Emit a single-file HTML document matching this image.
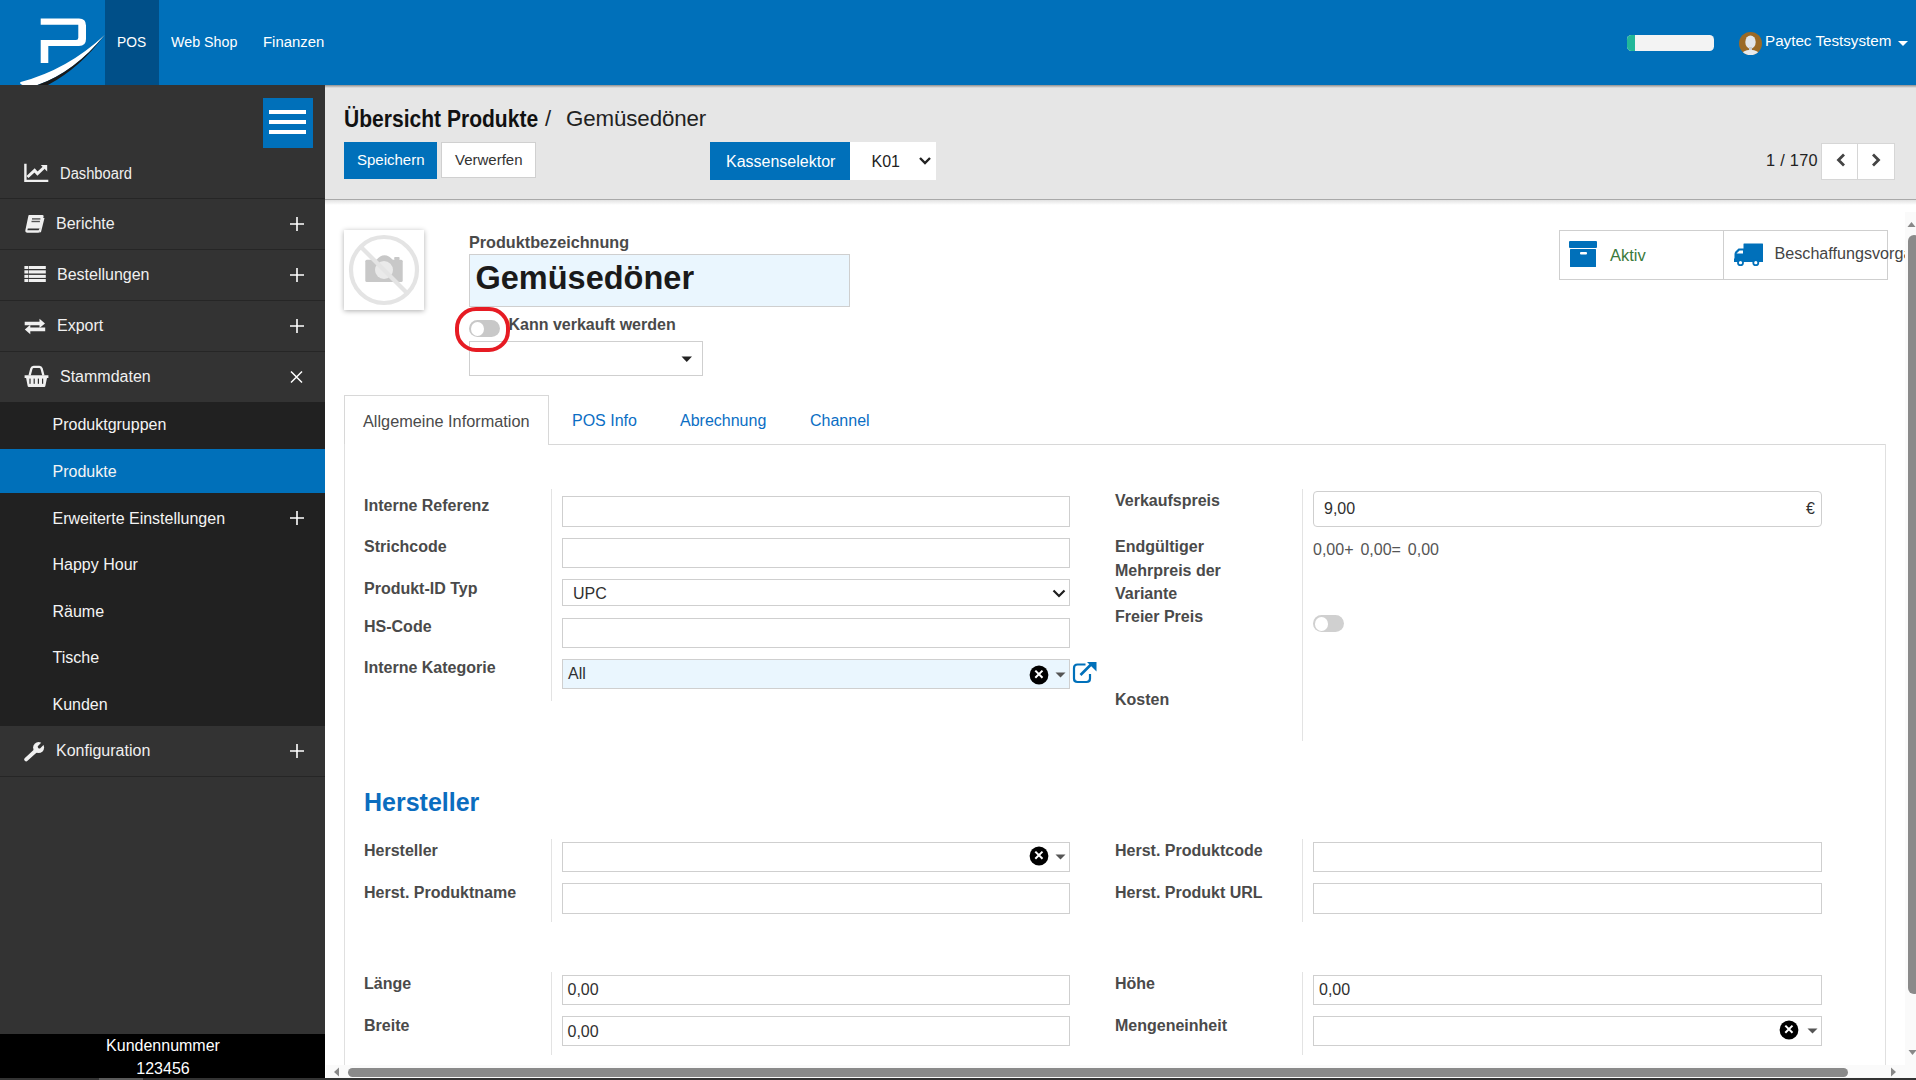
<!DOCTYPE html>
<html><head><meta charset="utf-8"><style>
html,body{margin:0;padding:0;width:1916px;height:1080px;overflow:hidden;background:#fff;}
body{position:relative;font-family:"Liberation Sans", sans-serif;}
.a{position:absolute;}
.t{white-space:nowrap;line-height:1;}
</style></head><body>
<div class="a" style="left:0px;top:0px;width:1916px;height:85px;background:#0070ba;"></div>
<div class="a" style="left:105px;top:0px;width:54px;height:85px;background:#004f88;"></div>
<svg class="a" style="left:0;top:0" width="105" height="85" viewBox="0 0 105 85">
<path d="M40.7 18.5 H79 Q86 18.5 86 25.5 V39 Q86 46 79 46 H48.3 V63 H40.7 V40 H76 Q78.3 40 78.3 37.7 V24.75 H40.7 Z" fill="#fff"/>
<path d="M20.7 81.9 Q67.3 69.6 104.7 34.9 Q73.65 72.8 36 85.5 L24 85.5 Q18.5 84 20.7 81.9 Z" fill="#fff"/>
<path d="M104.7 34.9 Q73.65 72.8 36 85.5 L47 85.5 Q80.15 67.8 104.7 34.9 Z" fill="#1a1a1a"/>
</svg>
<div class="a t" style="left:117px;top:33.88px;font-size:15.5px;color:#fff;transform:scaleX(0.89);transform-origin:0 0;">POS</div>
<div class="a t" style="left:171px;top:33.88px;font-size:15.5px;color:#fff;transform:scaleX(0.92);transform-origin:0 0;">Web Shop</div>
<div class="a t" style="left:263px;top:33.88px;font-size:15.5px;color:#fff;transform:scaleX(0.96);transform-origin:0 0;">Finanzen</div>
<div class="a" style="left:1627px;top:35px;width:87px;height:16px;background:#f3f3f3;border-radius:4.5px;overflow:hidden;"></div>
<div class="a" style="left:1627px;top:35px;width:8px;height:16px;background:#21b799;border-radius:4.5px 0 0 4.5px;"></div>
<svg class="a" style="left:1739px;top:32px" width="23" height="23" viewBox="0 0 23 23">
<circle cx="11.5" cy="11.5" r="11.5" fill="#9b6a26"/>
<clipPath id="avc"><circle cx="11.5" cy="11.5" r="11.5"/></clipPath>
<g clip-path="url(#avc)"><ellipse cx="11.5" cy="10" rx="5.2" ry="6.6" fill="#e2e6ea"/><rect x="10" y="15" width="3" height="3" fill="#c9ced4"/><ellipse cx="11.5" cy="23.8" rx="9.5" ry="6" fill="#e8eaec"/></g>
</svg>
<div class="a t" style="left:1765px;top:33.13px;font-size:15.2px;color:#fff;">Paytec Testsystem</div>
<svg class="a" style="left:1898px;top:41px" width="11" height="6"><path d="M0 0 H10 L5 5 Z" fill="#fff"/></svg>
<div class="a" style="left:0px;top:85px;width:325px;height:995px;background:#333333;"></div>
<div class="a" style="left:263px;top:98px;width:50px;height:50px;background:#0070ba;"></div>
<div class="a" style="left:269px;top:110px;width:37px;height:4px;background:#fff;"></div>
<div class="a" style="left:269px;top:120px;width:37px;height:4px;background:#fff;"></div>
<div class="a" style="left:269px;top:130px;width:37px;height:4px;background:#fff;"></div>
<div class="a" style="left:0px;top:198px;width:325px;height:1px;background:#262626;"></div>
<div class="a" style="left:0px;top:249px;width:325px;height:1px;background:#262626;"></div>
<div class="a" style="left:0px;top:300px;width:325px;height:1px;background:#262626;"></div>
<div class="a" style="left:0px;top:351px;width:325px;height:1px;background:#262626;"></div>
<svg class="a" style="left:24px;top:163px" width="26" height="20" viewBox="0 0 26 20">
<path d="M1.4 0.7 V17.9 H24.3" stroke="#f0f0f0" stroke-width="2.4" fill="none"/>
<path d="M3.5 14 L10.6 7.4 L13.5 10.7 L20 4.5" stroke="#f0f0f0" stroke-width="3" fill="none" stroke-linejoin="miter"/>
<path d="M16.8 2 H23.2 V8.4 Z" fill="#f0f0f0"/>
</svg>
<div class="a t" style="left:60px;top:165.96px;font-size:16px;color:#f0f0f0;transform:scaleX(0.92);transform-origin:0 0;">Dashboard</div>
<svg class="a" style="left:24px;top:214px" width="21" height="20" viewBox="0 0 21 20">
<path d="M5 1 H18.5 Q20 1 19.6 2.6 L16 17.2 Q15.5 18.7 14 18.7 H3 Q1 18.7 1.3 16.6 L4.3 2.3 Q4.6 1 5 1 Z" fill="#f0f0f0"/>
<path d="M3.4 16.2 H14.6 L15.6 14.5 H3.8 Z" fill="#333"/>
<rect x="8" y="4.2" width="8.4" height="1.4" fill="#555"/>
<rect x="7.5" y="6.8" width="8.4" height="1.4" fill="#555"/>
<path d="M18.3 4 L20.5 4 L17 18 L15.5 18.7 Z" fill="#f0f0f0"/>
</svg>
<div class="a t" style="left:56px;top:215.96px;font-size:16px;color:#f0f0f0;">Berichte</div>
<svg class="a" style="left:24px;top:265px" width="22" height="18" viewBox="0 0 22 18">
<rect x="0.4" y="1" width="3.9" height="3" fill="#f0f0f0"/><rect x="4.9" y="1" width="16.9" height="3" fill="#f0f0f0"/>
<rect x="0.4" y="5.3" width="3.9" height="3.2" fill="#f0f0f0"/><rect x="4.9" y="5.3" width="16.9" height="3.2" fill="#f0f0f0"/>
<rect x="0.4" y="9.9" width="3.9" height="3" fill="#f0f0f0"/><rect x="4.9" y="9.9" width="16.9" height="3" fill="#f0f0f0"/>
<rect x="0.4" y="14" width="3.9" height="3" fill="#f0f0f0"/><rect x="4.9" y="14" width="16.9" height="3" fill="#f0f0f0"/>
</svg>
<div class="a t" style="left:57px;top:266.96px;font-size:16px;color:#f0f0f0;">Bestellungen</div>
<svg class="a" style="left:24px;top:318px" width="22" height="17" viewBox="0 0 22 17">
<path d="M0.7 3.8 H15.5 V0.8 L21 5.5 L15.5 10 V7.2 H0.7 Z" fill="#f0f0f0"/>
<path d="M21.2 9.6 H6.3 V6.8 L0.8 11.5 L6.3 16.2 V13.2 H21.2 Z" fill="#f0f0f0"/>
</svg>
<div class="a t" style="left:57px;top:317.96px;font-size:16px;color:#f0f0f0;">Export</div>
<svg class="a" style="left:24px;top:365px" width="25" height="23" viewBox="0 0 25 23">
<path d="M5.6 10.5 L7.4 3.6 Q7.9 1.9 9.6 1.9 H15.4 Q17.1 1.9 17.6 3.6 L19.4 10.5" stroke="#f0f0f0" stroke-width="2.3" fill="none"/>
<path d="M0.6 10.2 H24.4 V13.1 H23 L21.3 21.3 Q21.1 22 20.3 22 H4.8 Q3.9 22 3.7 21.3 L2.1 13.1 H0.6 Z" fill="#f0f0f0"/>
<rect x="5.4" y="13.6" width="1.2" height="5.2" fill="#333"/><rect x="9.6" y="13.6" width="1.2" height="5.2" fill="#333"/>
<rect x="13.8" y="13.6" width="1.2" height="5.2" fill="#333"/><rect x="18" y="13.6" width="1.2" height="5.2" fill="#333"/>
</svg>
<div class="a t" style="left:60px;top:368.96px;font-size:16px;color:#f0f0f0;">Stammdaten</div>
<svg class="a" style="left:289px;top:215.5px" width="16" height="16" viewBox="0 0 16 16"><path d="M8 1 V15 M1 8 H15" stroke="#fff" stroke-width="1.6"/></svg>
<svg class="a" style="left:289px;top:266.5px" width="16" height="16" viewBox="0 0 16 16"><path d="M8 1 V15 M1 8 H15" stroke="#fff" stroke-width="1.6"/></svg>
<svg class="a" style="left:289px;top:317.5px" width="16" height="16" viewBox="0 0 16 16"><path d="M8 1 V15 M1 8 H15" stroke="#fff" stroke-width="1.6"/></svg>
<svg class="a" style="left:288px;top:369px" width="16" height="16" viewBox="0 0 16 16"><path d="M3 2.5 L14 13.5 M14 2.5 L3 13.5" stroke="#fff" stroke-width="1.5"/></svg>
<div class="a" style="left:0px;top:402px;width:325px;height:324px;background:#212121;"></div>
<div class="a" style="left:0px;top:449px;width:325px;height:44px;background:#0070ba;"></div>
<div class="a t" style="left:52.5px;top:417.16px;font-size:16px;color:#f4f4f4;">Produktgruppen</div>
<div class="a t" style="left:52.5px;top:464.16px;font-size:16px;color:#f4f4f4;">Produkte</div>
<div class="a t" style="left:52.5px;top:511.16px;font-size:16px;color:#f4f4f4;">Erweiterte Einstellungen</div>
<div class="a t" style="left:52.5px;top:557.16px;font-size:16px;color:#f4f4f4;">Happy Hour</div>
<div class="a t" style="left:52.5px;top:604.16px;font-size:16px;color:#f4f4f4;">Räume</div>
<div class="a t" style="left:52.5px;top:650.16px;font-size:16px;color:#f4f4f4;">Tische</div>
<div class="a t" style="left:52.5px;top:697.16px;font-size:16px;color:#f4f4f4;">Kunden</div>
<svg class="a" style="left:289px;top:510px" width="16" height="16" viewBox="0 0 16 16"><path d="M8 1 V15 M1 8 H15" stroke="#fff" stroke-width="1.6"/></svg>
<svg class="a" style="left:24px;top:741px" width="22" height="22" viewBox="0 0 22 22">
<path d="M2.2 18.4 L11.4 10" stroke="#f0f0f0" stroke-width="3.9" stroke-linecap="round"/>
<circle cx="14.6" cy="6.6" r="5.5" fill="#f0f0f0"/>
<path d="M15.4 5.8 L20.5 0.7" stroke="#333" stroke-width="3.2" stroke-linecap="round"/>
</svg>
<div class="a t" style="left:56px;top:742.96px;font-size:16px;color:#f0f0f0;">Konfiguration</div>
<div class="a" style="left:0px;top:776px;width:325px;height:1px;background:#262626;"></div>
<svg class="a" style="left:289px;top:743px" width="16" height="16" viewBox="0 0 16 16"><path d="M8 1 V15 M1 8 H15" stroke="#fff" stroke-width="1.6"/></svg>
<div class="a" style="left:0px;top:1034px;width:325px;height:46px;background:#000;"></div>
<div class="a t" style="left:163px;top:1037.96px;font-size:16px;color:#fff;transform:translateX(-50%);">Kundennummer</div>
<div class="a t" style="left:163px;top:1060.96px;font-size:16px;color:#fff;transform:translateX(-50%);">123456</div>
<div class="a" style="left:325px;top:85px;width:1591px;height:114px;background:#e6e6e6;"></div>
<div class="a" style="left:325px;top:199px;width:1591px;height:1px;background:#a9a9a9;"></div>
<div class="a" style="left:325px;top:200px;width:1591px;height:5px;background:linear-gradient(#e2e2e2,#fff);"></div>
<div class="a" style="left:325px;top:85px;width:1591px;height:3px;background:linear-gradient(#8f8f8f,#e6e6e6);"></div>
<div class="a t" style="left:344px;top:106.7px;font-size:24px;font-weight:700;color:#111;transform:scaleX(0.877);transform-origin:0 0;">Übersicht Produkte</div>
<div class="a t" style="left:545px;top:108.38px;font-size:22px;color:#222;">/</div>
<div class="a t" style="left:566px;top:108.12px;font-size:22.3px;color:#222;letter-spacing:-0.1px;">Gemüsedöner</div>
<div class="a" style="left:344px;top:142px;width:93px;height:37px;background:#0070ba;"></div>
<div class="a t" style="left:357px;top:151.80px;font-size:15px;color:#fff;">Speichern</div>
<div class="a" style="left:441px;top:142px;width:95px;height:36px;background:#fff;border:1px solid #d0d0d0;box-sizing:border-box;"></div>
<div class="a t" style="left:455px;top:151.80px;font-size:15px;color:#333;">Verwerfen</div>
<div class="a" style="left:710px;top:142px;width:140px;height:38px;background:#0070ba;"></div>
<div class="a t" style="left:726px;top:154.46px;font-size:16px;color:#fff;">Kassenselektor</div>
<div class="a" style="left:850px;top:142px;width:86px;height:38px;background:#fff;"></div>
<div class="a t" style="left:871.5px;top:154.46px;font-size:16px;color:#222;">K01</div>
<svg class="a" style="left:918px;top:156px" width="14" height="10" viewBox="0 0 14 10"><path d="M2 2 L7 7 L12 2" stroke="#222" stroke-width="2.4" fill="none"/></svg>
<div class="a t" style="left:1766px;top:152.20px;font-size:16.3px;color:#222;letter-spacing:0.3px;">1 / 170</div>
<div class="a" style="left:1821px;top:143px;width:74px;height:37px;background:#fff;border:1px solid #d6d6d6;box-sizing:border-box;"></div>
<div class="a" style="left:1857px;top:143px;width:1px;height:37px;background:#d6d6d6;"></div>
<svg class="a" style="left:1834.5px;top:152.5px" width="12" height="14" viewBox="0 0 12 14"><path d="M9 1.5 L3.5 7 L9 12.5" stroke="#444" stroke-width="2.8" fill="none"/></svg>
<svg class="a" style="left:1870px;top:152.5px" width="12" height="14" viewBox="0 0 12 14"><path d="M3 1.5 L8.5 7 L3 12.5" stroke="#444" stroke-width="2.8" fill="none"/></svg>
<div class="a" style="left:344px;top:230px;width:80px;height:80px;background:#fff;box-shadow:0 1px 5px rgba(0,0,0,0.32);"></div>
<svg class="a" style="left:344px;top:230px" width="80" height="80" viewBox="0 0 80 80">
<rect x="21.3" y="29.8" width="37.4" height="22.2" rx="1.5" fill="#c8c8c8"/>
<path d="M32.4 30 Q36 25.3 40.5 25.3 Q45 25.3 48.9 30 Z" fill="#c8c8c8"/>
<rect x="50.2" y="27.1" width="5.4" height="3" rx="0.8" fill="#c8c8c8"/>
<circle cx="40" cy="40" r="9" fill="#eaeaea"/>
<circle cx="40" cy="40" r="33" stroke="#e4e4e4" stroke-width="4.2" fill="none"/>
<path d="M17 17 L63 63" stroke="#e4e4e4" stroke-width="4.2"/>
</svg>
<div class="a t" style="left:469px;top:233.89px;font-size:16.2px;color:#4a4a4a;font-weight:700;">Produktbezeichnung</div>
<div class="a" style="left:469px;top:254px;width:381px;height:53px;background:#eaf6fe;border:1px solid #cfcfcf;box-sizing:border-box;"></div>
<div class="a t" style="left:475.5px;top:262.49px;font-size:32.5px;color:#1a1a1a;font-weight:700;">Gemüsedöner</div>
<div class="a" style="left:469px;top:320px;width:31px;height:17px;background:#c8c8c8;border-radius:9px;"></div>
<div class="a" style="left:470.5px;top:321.5px;width:13.0px;height:14.0px;background:#fff;border-radius:50%;"></div>
<div class="a t" style="left:508.5px;top:317.46px;font-size:16px;color:#4a4a4a;font-weight:700;">Kann verkauft werden</div>
<div class="a" style="left:469px;top:341px;width:234px;height:35px;background:#fff;border:1px solid #cfcfcf;box-sizing:border-box;"></div>
<svg class="a" style="left:681px;top:356px" width="12" height="7"><path d="M0.5 0.5 H11 L5.75 6 Z" fill="#222"/></svg>
<div class="a" style="left:455px;top:307px;width:55px;height:45px;border:4px solid #e61b23;border-radius:21px;box-sizing:border-box;"></div>
<div class="a" style="left:1559px;top:230px;width:329px;height:50px;background:#fff;border:1px solid #cfcfcf;box-sizing:border-box;"></div>
<div class="a" style="left:1723px;top:230px;width:1px;height:50px;background:#cfcfcf;"></div>
<svg class="a" style="left:1568px;top:240px" width="30" height="28" viewBox="0 0 30 28">
<rect x="1" y="1" width="28" height="7" rx="1" fill="#0070ba"/>
<rect x="2" y="9" width="26" height="18" rx="0.5" fill="#0070ba"/>
<rect x="12" y="12" width="7" height="2.4" rx="1" fill="#fff"/>
</svg>
<div class="a t" style="left:1610px;top:246.53px;font-size:16.5px;color:#3b7a3b;">Aktiv</div>
<svg class="a" style="left:1732.5px;top:243px" width="31" height="25" viewBox="0 0 31 25">
<rect x="10.5" y="0.5" width="19.5" height="16.5" rx="0.5" fill="#0070ba"/>
<path d="M1.5 18.5 V11 Q1.5 9.5 2.5 8.5 L5.5 5.5 H11 V17 Z" fill="#0070ba"/>
<path d="M3.5 10.5 L6.6 7.4 H10 V10.5 Z" fill="#fff"/>
<rect x="1" y="15.5" width="29" height="3.5" fill="#0070ba"/>
<circle cx="7.5" cy="19.7" r="3.4" fill="#0070ba"/><circle cx="7.5" cy="19.7" r="1.6" fill="#fff"/>
<circle cx="22.8" cy="19.7" r="3.4" fill="#0070ba"/><circle cx="22.8" cy="19.7" r="1.6" fill="#fff"/>
</svg>
<div class="a" style="left:1774px;top:230px;width:131px;height:50px;overflow:hidden;">
<div class="a t" style="left:0.5px;top:14.83px;font-size:16.15px;color:#444;">Beschaffungsvorgänge</div>
</div>
<div class="a" style="left:344px;top:395px;width:205px;height:50px;background:#fff;border:1px solid #d8d8d8;border-bottom:none;box-sizing:border-box;"></div>
<div class="a" style="left:549px;top:444px;width:1337px;height:1px;background:#d8d8d8;"></div>
<div class="a" style="left:344px;top:444px;width:1px;height:621px;background:#e0e0e0;"></div>
<div class="a" style="left:1885px;top:444px;width:1px;height:621px;background:#e0e0e0;"></div>
<div class="a t" style="left:363px;top:413.00px;font-size:16.3px;color:#4a4a4a;">Allgemeine Information</div>
<div class="a t" style="left:572px;top:413.26px;font-size:16px;color:#0b6ec4;">POS Info</div>
<div class="a t" style="left:680px;top:413.26px;font-size:16px;color:#0b6ec4;">Abrechnung</div>
<div class="a t" style="left:810px;top:413.26px;font-size:16px;color:#0b6ec4;">Channel</div>
<div class="a" style="left:551px;top:489px;width:1px;height:212px;background:#e3e3e3;"></div>
<div class="a t" style="left:364px;top:498.46px;font-size:16px;color:#4a4a4a;font-weight:700;">Interne Referenz</div>
<div class="a t" style="left:364px;top:539.46px;font-size:16px;color:#4a4a4a;font-weight:700;">Strichcode</div>
<div class="a t" style="left:364px;top:581.46px;font-size:16px;color:#4a4a4a;font-weight:700;">Produkt-ID Typ</div>
<div class="a t" style="left:364px;top:619.46px;font-size:16px;color:#4a4a4a;font-weight:700;">HS-Code</div>
<div class="a t" style="left:364px;top:660.46px;font-size:16px;color:#4a4a4a;font-weight:700;">Interne Kategorie</div>
<div class="a" style="left:562px;top:496px;width:508px;height:31px;background:#fff;border:1px solid #cfcfcf;box-sizing:border-box;"></div>
<div class="a" style="left:562px;top:538px;width:508px;height:30px;background:#fff;border:1px solid #cfcfcf;box-sizing:border-box;"></div>
<div class="a" style="left:562px;top:579px;width:508px;height:27px;background:#fff;border:1px solid #cfcfcf;box-sizing:border-box;"></div>
<div class="a t" style="left:573px;top:586.46px;font-size:16px;color:#303030;">UPC</div>
<svg class="a" style="left:1052px;top:588.5px" width="14" height="9" viewBox="0 0 14 9"><path d="M1.5 1.5 L7 7 L12.5 1.5" stroke="#1e1e1e" stroke-width="2.2" fill="none"/></svg>
<div class="a" style="left:562px;top:618px;width:508px;height:30px;background:#fff;border:1px solid #cfcfcf;box-sizing:border-box;"></div>
<div class="a" style="left:562px;top:659px;width:508px;height:30px;background:#eaf6fe;border:1px solid #cfcfcf;box-sizing:border-box;"></div>
<div class="a t" style="left:568px;top:666.46px;font-size:16px;color:#303030;">All</div>
<svg class="a" style="left:1028.5px;top:665.3px" width="20" height="20" viewBox="0 0 20 20"><circle cx="10" cy="10" r="9.4" fill="#000"/><path d="M6.3 5.6 L13.5 12.8 M13.5 5.6 L6.3 12.8" stroke="#fff" stroke-width="2"/></svg>
<svg class="a" style="left:1054.5px;top:672px" width="11" height="6"><path d="M0.5 0.5 H10.5 L5.5 5.5 Z" fill="#555"/></svg>
<svg class="a" style="left:1072px;top:661px" width="26" height="23" viewBox="0 0 26 23">
<path d="M13.5 3.5 H5.5 Q2 3.5 2 7 V17.5 Q2 21 5.5 21 H14.5 Q18 21 18 17.5 V13" stroke="#0070ba" stroke-width="2.2" fill="none"/>
<path d="M8.5 14 L20 2.5" stroke="#0070ba" stroke-width="2.6"/>
<path d="M15 1 H24.5 V10.5 Z" fill="#0070ba"/>
</svg>
<div class="a" style="left:1302px;top:489px;width:1px;height:252px;background:#e3e3e3;"></div>
<div class="a t" style="left:1115px;top:493.46px;font-size:16px;color:#4a4a4a;font-weight:700;">Verkaufspreis</div>
<div class="a" style="left:1313px;top:491px;width:509px;height:36px;background:#fff;border:1px solid #cfcfcf;box-sizing:border-box;border-radius:4px;"></div>
<div class="a t" style="left:1324px;top:501.46px;font-size:16px;color:#303030;">9,00</div>
<div class="a t" style="left:1806px;top:501.46px;font-size:16px;color:#303030;">€</div>
<div class="a t" style="left:1115px;top:539.46px;font-size:16px;color:#4a4a4a;font-weight:700;">Endgültiger</div>
<div class="a t" style="left:1115px;top:563.46px;font-size:16px;color:#4a4a4a;font-weight:700;">Mehrpreis der</div>
<div class="a t" style="left:1115px;top:586.46px;font-size:16px;color:#4a4a4a;font-weight:700;">Variante</div>
<div class="a t" style="left:1115px;top:609.46px;font-size:16px;color:#4a4a4a;font-weight:700;">Freier Preis</div>
<div class="a t" style="left:1313px;top:542.46px;font-size:16px;color:#555;word-spacing:2.5px;">0,00+ 0,00= 0,00</div>
<div class="a" style="left:1313px;top:615px;width:31px;height:17px;background:#d0d0d0;border-radius:9px;"></div>
<div class="a" style="left:1314.5px;top:616.5px;width:13.5px;height:14.0px;background:#fff;border-radius:50%;"></div>
<div class="a t" style="left:1115px;top:692.46px;font-size:16px;color:#4a4a4a;font-weight:700;">Kosten</div>
<div class="a t" style="left:364px;top:789.84px;font-size:25px;color:#0b6dbf;font-weight:700;">Hersteller</div>
<div class="a" style="left:551px;top:839px;width:1px;height:83px;background:#e3e3e3;"></div>
<div class="a t" style="left:364px;top:843.46px;font-size:16px;color:#4a4a4a;font-weight:700;">Hersteller</div>
<div class="a t" style="left:364px;top:885.46px;font-size:16px;color:#4a4a4a;font-weight:700;">Herst. Produktname</div>
<div class="a" style="left:562px;top:842px;width:508px;height:30px;background:#fff;border:1px solid #cfcfcf;box-sizing:border-box;"></div>
<svg class="a" style="left:1028.5px;top:846px" width="20" height="20" viewBox="0 0 20 20"><circle cx="10" cy="10" r="9.4" fill="#000"/><path d="M6.3 5.6 L13.5 12.8 M13.5 5.6 L6.3 12.8" stroke="#fff" stroke-width="2"/></svg>
<svg class="a" style="left:1054.5px;top:854px" width="11" height="6"><path d="M0.5 0.5 H10.5 L5.5 5.5 Z" fill="#555"/></svg>
<div class="a" style="left:562px;top:883px;width:508px;height:31px;background:#fff;border:1px solid #cfcfcf;box-sizing:border-box;"></div>
<div class="a" style="left:1302px;top:839px;width:1px;height:83px;background:#e3e3e3;"></div>
<div class="a t" style="left:1115px;top:843.46px;font-size:16px;color:#4a4a4a;font-weight:700;">Herst. Produktcode</div>
<div class="a t" style="left:1115px;top:885.46px;font-size:16px;color:#4a4a4a;font-weight:700;">Herst. Produkt URL</div>
<div class="a" style="left:1313px;top:842px;width:509px;height:30px;background:#fff;border:1px solid #cfcfcf;box-sizing:border-box;"></div>
<div class="a" style="left:1313px;top:883px;width:509px;height:31px;background:#fff;border:1px solid #cfcfcf;box-sizing:border-box;"></div>
<div class="a" style="left:551px;top:972px;width:1px;height:83px;background:#e3e3e3;"></div>
<div class="a t" style="left:364px;top:976.46px;font-size:16px;color:#4a4a4a;font-weight:700;">Länge</div>
<div class="a t" style="left:364px;top:1018.46px;font-size:16px;color:#4a4a4a;font-weight:700;">Breite</div>
<div class="a" style="left:562px;top:975px;width:508px;height:30px;background:#fff;border:1px solid #cfcfcf;box-sizing:border-box;"></div>
<div class="a t" style="left:567.5px;top:982.46px;font-size:16px;color:#303030;">0,00</div>
<div class="a" style="left:562px;top:1016px;width:508px;height:30px;background:#fff;border:1px solid #cfcfcf;box-sizing:border-box;"></div>
<div class="a t" style="left:567.5px;top:1024.46px;font-size:16px;color:#303030;">0,00</div>
<div class="a" style="left:1302px;top:972px;width:1px;height:83px;background:#e3e3e3;"></div>
<div class="a t" style="left:1115px;top:976.46px;font-size:16px;color:#4a4a4a;font-weight:700;">Höhe</div>
<div class="a t" style="left:1115px;top:1018.46px;font-size:16px;color:#4a4a4a;font-weight:700;">Mengeneinheit</div>
<div class="a" style="left:1313px;top:975px;width:509px;height:30px;background:#fff;border:1px solid #cfcfcf;box-sizing:border-box;"></div>
<div class="a t" style="left:1319px;top:982.46px;font-size:16px;color:#303030;">0,00</div>
<div class="a" style="left:1313px;top:1016px;width:509px;height:30px;background:#fff;border:1px solid #cfcfcf;box-sizing:border-box;"></div>
<svg class="a" style="left:1779px;top:1020px" width="20" height="20" viewBox="0 0 20 20"><circle cx="10" cy="10" r="9.4" fill="#000"/><path d="M6.3 5.6 L13.5 12.8 M13.5 5.6 L6.3 12.8" stroke="#fff" stroke-width="2"/></svg>
<svg class="a" style="left:1806.5px;top:1028px" width="11" height="6"><path d="M0.5 0.5 H10.5 L5.5 5.5 Z" fill="#555"/></svg>
<div class="a" style="left:1905px;top:212px;width:11px;height:853px;background:#fafafa;"></div>
<svg class="a" style="left:1907px;top:221px" width="9" height="7"><path d="M0.5 6 L4.5 1 L8.5 6 Z" fill="#888"/></svg>
<div class="a" style="left:1908px;top:235px;width:12px;height:759px;background:#8a8a8a;border-radius:6px;"></div>
<svg class="a" style="left:1908px;top:1049px" width="9" height="7"><path d="M0.5 1 L4.5 6 L8.5 1 Z" fill="#888"/></svg>
<div class="a" style="left:326px;top:1065px;width:1590px;height:13px;background:#fafafa;"></div>
<svg class="a" style="left:333px;top:1067px" width="7" height="10"><path d="M6 0.5 L1 5 L6 9.5 Z" fill="#888"/></svg>
<div class="a" style="left:348px;top:1068px;width:1500px;height:9px;background:#8a8a8a;border-radius:5px;"></div>
<svg class="a" style="left:1890px;top:1067px" width="7" height="10"><path d="M1 0.5 L6 5 L1 9.5 Z" fill="#888"/></svg>
<div class="a" style="left:0px;top:1078px;width:1916px;height:2px;background:#333;"></div>
<div class="a" style="left:99px;top:1078px;width:44px;height:2px;background:#5a5a5a;"></div>
</body></html>
